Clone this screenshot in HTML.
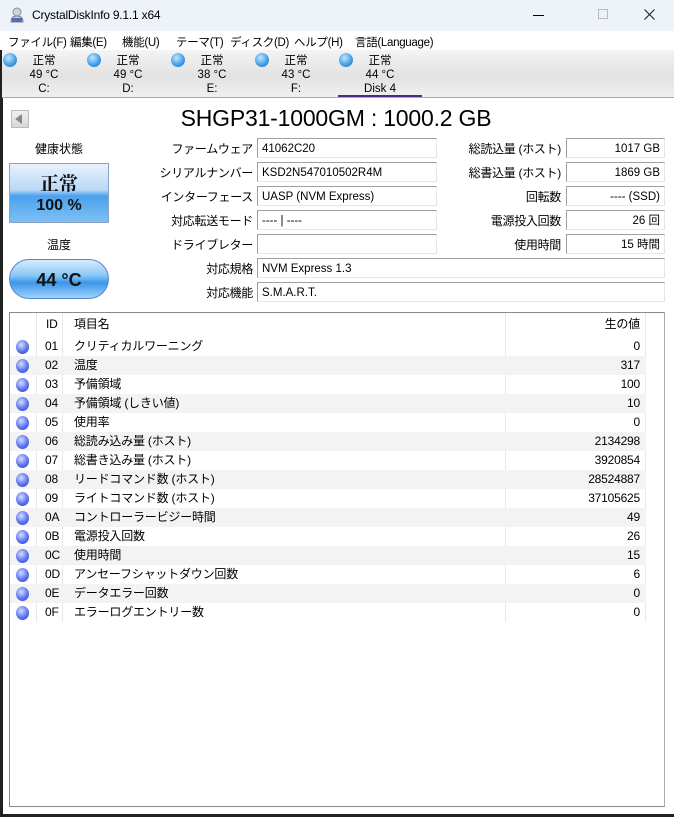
<!DOCTYPE html>
<html><head><meta charset="utf-8"><style>
*{margin:0;padding:0;box-sizing:border-box}
body{width:674px;height:817px;position:relative;overflow:hidden;background:#fff;font-family:"Liberation Sans","Noto Sans CJK JP",sans-serif;font-size:11.5px;color:#000}
.a{position:absolute}
.title{left:0;top:0;width:674px;height:31px;background:#eef3f9}
.menu{left:0;top:31px;width:674px;height:19px;background:#fff}
.menu span{position:absolute;top:3px;font-size:11.5px;letter-spacing:-0.3px}
.tabs{left:2px;top:50px;width:672px;height:48px;background:linear-gradient(#f4f4f4,#e2e2e2 55%,#f0f0f0);border-bottom:1px solid #a8a8a8}
.tab{position:absolute;top:0;width:80px;text-align:center;font-size:11.5px;line-height:14px}
.orb{position:absolute;width:14px;height:14px;border-radius:50%;background:radial-gradient(circle at 40% 35%,#bfe6ff,#3d9be6 60%,#1f6fc2)}
.lb{position:absolute;text-align:right;font-size:12px;letter-spacing:-0.3px}
.f{position:absolute;height:20px;border-top:1px solid #a0a0a0;border-left:1px solid #a0a0a0;border-bottom:1px solid #e6e6e6;border-right:1px solid #e6e6e6;font-size:11.5px;line-height:20px;padding:0 4px;background:#fff}
.r{text-align:right}
.tbl{left:9px;top:312px;width:656px;height:495px;border:1px solid #8a8a8a;border-right-color:#aaa}
.row{position:absolute;left:0;width:636px;height:19px;font-size:12px;line-height:19px;letter-spacing:-0.2px}
.row.g{background:#f3f3f3}
.row span{position:absolute}
.ro{position:absolute;left:6px;top:3px;width:13px;height:14px;border-radius:50%;background:radial-gradient(circle at 40% 35%,#d6dcff,#5b74ee 55%,#2d3fc4)}
</style></head><body>
<div class="a title">
 <svg class="a" style="left:9px;top:7px" width="16" height="16" viewBox="0 0 16 16"><circle cx="8" cy="5" r="4" fill="#cfd4dc" stroke="#8890a0"/><path d="M2 15 Q2 9 8 9 Q14 9 14 15Z" fill="#c8ccd4" stroke="#7880a0"/><rect x="3" y="11" width="10" height="4" fill="#5a6ab0"/></svg>
 <span class="a" style="left:32px;top:8px;font-size:12px;letter-spacing:-0.2px">CrystalDiskInfo 9.1.1 x64</span>
 <span class="a" style="left:533px;top:15px;width:11px;height:1px;background:#000"></span>
 <span class="a" style="left:598px;top:9px;width:10px;height:10px;border:1px solid #bbb"></span>
 <svg class="a" style="left:644px;top:9px" width="11" height="11" viewBox="0 0 11 11"><path d="M0.5 0.5L10.5 10.5M10.5 0.5L0.5 10.5" stroke="#222" stroke-width="1.1"/></svg>
</div>
<div class="a" style="left:0;top:31px;width:3px;height:786px;background:#222"></div>
<div class="a" style="left:0;top:814px;width:674px;height:3px;background:#222"></div>
<div class="a menu">
 <span style="left:8px">ファイル(F)</span><span style="left:70px">編集(E)</span><span style="left:122px">機能(U)</span><span style="left:176px">テーマ(T)</span><span style="left:230px">ディスク(D)</span><span style="left:294px">ヘルプ(H)</span><span style="left:355px">言語(Language)</span>
</div>
<div class="a tabs">
 <div class="orb" style="left:1px;top:3px"></div><div class="tab" style="left:2px;top:4px">正常<br>49 °C<br>C:</div>
 <div class="orb" style="left:85px;top:3px"></div><div class="tab" style="left:86px;top:4px">正常<br>49 °C<br>D:</div>
 <div class="orb" style="left:169px;top:3px"></div><div class="tab" style="left:170px;top:4px">正常<br>38 °C<br>E:</div>
 <div class="orb" style="left:253px;top:3px"></div><div class="tab" style="left:254px;top:4px">正常<br>43 °C<br>F:</div>
 <div class="orb" style="left:337px;top:3px"></div><div class="tab" style="left:338px;top:4px">正常<br>44 °C<br>Disk 4</div>
 <div class="a" style="left:336px;top:45px;width:84px;height:2px;background:#4a2a8a"></div>
</div>
<div class="a" style="left:11px;top:110px;width:18px;height:18px;background:linear-gradient(#f0f0f0,#d8d8d8);border:1px solid #bbb"></div>
<div class="a" style="left:15px;top:114px;width:0;height:0;border-top:5px solid transparent;border-bottom:5px solid transparent;border-right:7px solid #888"></div>
<div class="a" style="left:-1px;top:105px;width:674px;text-align:center;font-size:23px;letter-spacing:-0.2px">SHGP31-1000GM : 1000.2 GB</div>
<div class="a" style="left:9px;top:140px;width:100px;text-align:center;font-size:12px">健康状態</div>
<div class="a" style="left:9px;top:163px;width:100px;height:60px;border:1px solid #8aa0c0;background:linear-gradient(#e8f2fc,#b8d8f6 45%,#4aa2ee 55%,#7ec0f4);text-align:center;font-weight:bold;color:#111">
 <div style="font-size:19px;margin-top:5px;font-family:'Noto Serif CJK SC','Liberation Serif',serif">正常</div><div style="font-size:16px;margin-top:1px">100 %</div></div>
<div class="a" style="left:9px;top:236px;width:100px;text-align:center;font-size:12px">温度</div>
<div class="a" style="left:9px;top:259px;width:100px;height:40px;border:1px solid #5a86c8;border-radius:20px;background:linear-gradient(#d8ecfc,#8cc8f6 40%,#3c96ea 60%,#9ed2fa);text-align:center;font-weight:bold;font-size:18px;line-height:40px;color:#111">44 °C</div>

<div class="lb" style="left:130px;width:123px;top:140px">ファームウェア</div><div class="f" style="left:257px;top:138px;width:180px">41062C20</div>
<div class="lb" style="left:130px;width:123px;top:164px">シリアルナンバー</div><div class="f" style="left:257px;top:162px;width:180px">KSD2N547010502R4M</div>
<div class="lb" style="left:130px;width:123px;top:188px">インターフェース</div><div class="f" style="left:257px;top:186px;width:180px">UASP (NVM Express)</div>
<div class="lb" style="left:130px;width:123px;top:212px">対応転送モード</div><div class="f" style="left:257px;top:210px;width:180px">---- | ----</div>
<div class="lb" style="left:130px;width:123px;top:236px">ドライブレター</div><div class="f" style="left:257px;top:234px;width:180px"></div>
<div class="lb" style="left:130px;width:123px;top:260px">対応規格</div><div class="f" style="left:257px;top:258px;width:408px">NVM Express 1.3</div>
<div class="lb" style="left:130px;width:123px;top:284px">対応機能</div><div class="f" style="left:257px;top:282px;width:408px">S.M.A.R.T.</div>

<div class="lb" style="left:440px;width:121px;top:140px">総読込量 (ホスト)</div><div class="f r" style="left:566px;top:138px;width:99px">1017 GB</div>
<div class="lb" style="left:440px;width:121px;top:164px">総書込量 (ホスト)</div><div class="f r" style="left:566px;top:162px;width:99px">1869 GB</div>
<div class="lb" style="left:440px;width:121px;top:188px">回転数</div><div class="f r" style="left:566px;top:186px;width:99px">---- (SSD)</div>
<div class="lb" style="left:440px;width:121px;top:212px">電源投入回数</div><div class="f r" style="left:566px;top:210px;width:99px">26 回</div>
<div class="lb" style="left:440px;width:121px;top:236px">使用時間</div><div class="f r" style="left:566px;top:234px;width:99px">15 時間</div>

<div class="a tbl">
 <div class="a" style="left:26px;top:0;width:1px;height:309px;background:#e8e8e8"></div>
 <div class="a" style="left:52px;top:0;width:1px;height:309px;background:#e8e8e8"></div>
 <div class="a" style="left:495px;top:0;width:1px;height:309px;background:#e8e8e8"></div>
 <div class="a" style="left:635px;top:0;width:1px;height:309px;background:#e8e8e8"></div>
 <div class="row" style="top:2px"><span style="left:36px">ID</span><span style="left:64px">項目名</span><span style="right:6px">生の値</span></div>
 <div class="row" style="top:24px"><i class="ro"></i><span style="left:35px">01</span><span style="left:64px">クリティカルワーニング</span><span style="right:6px">0</span></div>
 <div class="row g" style="top:43px"><i class="ro"></i><span style="left:35px">02</span><span style="left:64px">温度</span><span style="right:6px">317</span></div>
 <div class="row" style="top:62px"><i class="ro"></i><span style="left:35px">03</span><span style="left:64px">予備領域</span><span style="right:6px">100</span></div>
 <div class="row g" style="top:81px"><i class="ro"></i><span style="left:35px">04</span><span style="left:64px">予備領域 (しきい値)</span><span style="right:6px">10</span></div>
 <div class="row" style="top:100px"><i class="ro"></i><span style="left:35px">05</span><span style="left:64px">使用率</span><span style="right:6px">0</span></div>
 <div class="row g" style="top:119px"><i class="ro"></i><span style="left:35px">06</span><span style="left:64px">総読み込み量 (ホスト)</span><span style="right:6px">2134298</span></div>
 <div class="row" style="top:138px"><i class="ro"></i><span style="left:35px">07</span><span style="left:64px">総書き込み量 (ホスト)</span><span style="right:6px">3920854</span></div>
 <div class="row g" style="top:157px"><i class="ro"></i><span style="left:35px">08</span><span style="left:64px">リードコマンド数 (ホスト)</span><span style="right:6px">28524887</span></div>
 <div class="row" style="top:176px"><i class="ro"></i><span style="left:35px">09</span><span style="left:64px">ライトコマンド数 (ホスト)</span><span style="right:6px">37105625</span></div>
 <div class="row g" style="top:195px"><i class="ro"></i><span style="left:35px">0A</span><span style="left:64px">コントローラービジー時間</span><span style="right:6px">49</span></div>
 <div class="row" style="top:214px"><i class="ro"></i><span style="left:35px">0B</span><span style="left:64px">電源投入回数</span><span style="right:6px">26</span></div>
 <div class="row g" style="top:233px"><i class="ro"></i><span style="left:35px">0C</span><span style="left:64px">使用時間</span><span style="right:6px">15</span></div>
 <div class="row" style="top:252px"><i class="ro"></i><span style="left:35px">0D</span><span style="left:64px">アンセーフシャットダウン回数</span><span style="right:6px">6</span></div>
 <div class="row g" style="top:271px"><i class="ro"></i><span style="left:35px">0E</span><span style="left:64px">データエラー回数</span><span style="right:6px">0</span></div>
 <div class="row" style="top:290px"><i class="ro"></i><span style="left:35px">0F</span><span style="left:64px">エラーログエントリー数</span><span style="right:6px">0</span></div>
</div>
</body></html>
